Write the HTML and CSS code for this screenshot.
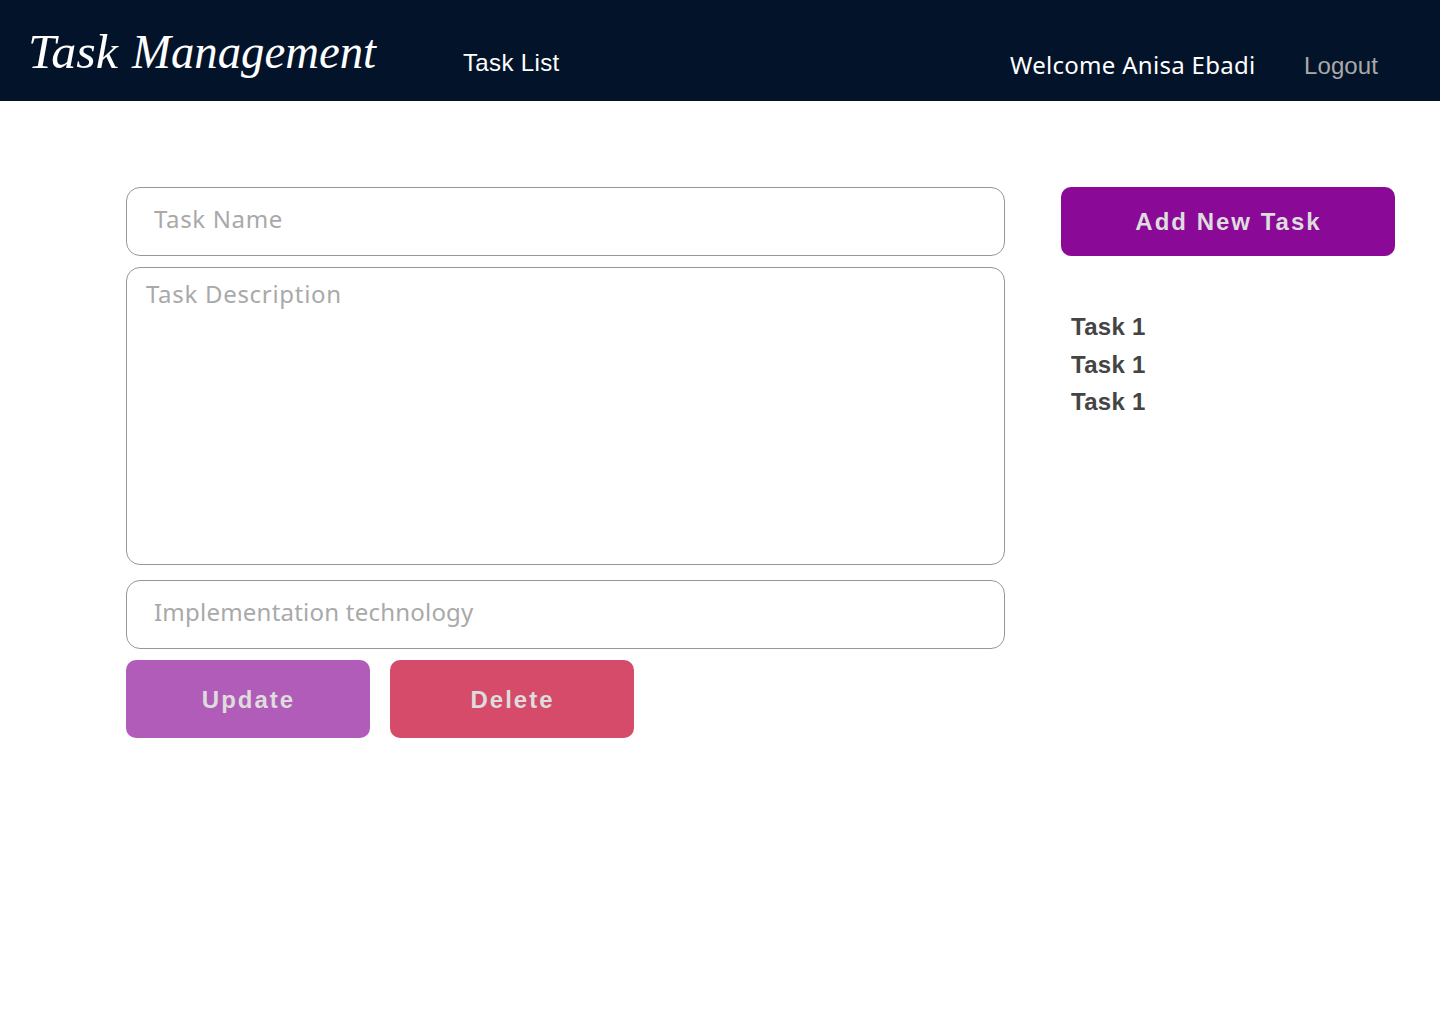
FILE: index.html
```html
<!DOCTYPE html>
<html lang="en">
<head>
<meta charset="utf-8">
<title>Task Management</title>
<link rel="stylesheet" href="styles.css">
</head>
<body>
<header class="topbar">
  <svg class="brand" width="370" height="100" role="img" aria-label="Task Management"><text class="brand-text" y="68"><tspan x="28" textLength="90" lengthAdjust="spacingAndGlyphs">Task</tspan> <tspan x="132" textLength="244" lengthAdjust="spacingAndGlyphs">Management</tspan></text></svg>
  <nav class="nav"><a class="nav-link">Task List</a></nav>
  <span class="welcome">Welcome Anisa Ebadi</span>
  <a class="logout">Logout</a>
</header>
<main class="page">
  <form class="editor">
    <input class="field name" placeholder="Task Name">
    <textarea class="field description" placeholder="Task Description"></textarea>
    <input class="field technology" placeholder="Implementation technology">
    <div class="actions">
      <button type="button" class="button update">Update</button>
      <button type="button" class="button delete">Delete</button>
    </div>
  </form>
  <aside class="sidebar">
    <button type="button" class="button add">Add New Task</button>
    <ul class="tasks">
      <li class="task">Task 1</li>
      <li class="task">Task 1</li>
      <li class="task">Task 1</li>
    </ul>
  </aside>
</main>
</body>
</html>
```
FILE: styles.css
```css
* { box-sizing: border-box; }
body { margin: 0; background: #fff; font-family: "Liberation Sans", Arial, sans-serif; font-size: 24px; }
.topbar { display: flex; height: 101px; background: #03142a; color: #fff; line-height: 28px; white-space: nowrap; }
.brand { flex: none; overflow: visible; }
.brand-text { fill: #fff; font: italic 48px "Apple Chancery", "Z003", "Liberation Serif", serif; }
.nav { width: 547px; padding: 49px 0 0 93px; margin-right: 93px; letter-spacing: 0.35px; }
.welcome { width: 294px; padding-top: 51px; font-family: "Lucida Grande", "Noto Sans", sans-serif; letter-spacing: 0.3px; }
.logout { padding-top: 52px; color: #a9a9a9; letter-spacing: 0.1px; }
.page { display: flex; gap: 56px; padding: 86px 45px 0 126px; }
.editor { display: flex; flex-direction: column; width: 879px; }
.field { display: block; width: 100%; height: 69px; border: 1px solid #979797; border-radius: 14px; background: #fff; font: 24px "Lucida Grande", "Noto Sans", sans-serif; letter-spacing: 0.65px; outline: 0; resize: none; }
.field::placeholder { color: #a9a9a9; opacity: 1; }
.name { padding: 0 27px 6px; }
.description { height: 298px; margin: 11px 0 15px; padding: 9px 19px; letter-spacing: 0.7px; }
.technology { padding: 0 27px 6px; letter-spacing: 0.22px; }
.actions { display: flex; gap: 20px; margin-top: 11px; }
.button { width: 244px; height: 78px; border: 0; border-radius: 10px; padding: 2px 0 0 1px; color: #ddd; font: bold 24px "Liberation Sans", Arial, sans-serif; letter-spacing: 2px; }
.update { background: #b05cb8; }
.delete { background: #d74b6a; }
.sidebar { width: 334px; }
.add { width: 334px; height: 69px; padding: 0 0 0 1px; background: #8a0a97; }
.tasks { list-style: none; margin: 52px 0 0; padding: 0 10px; color: #444; font-weight: bold; letter-spacing: 0.3px; }
.task { height: 37.5px; line-height: 37px; }
```
